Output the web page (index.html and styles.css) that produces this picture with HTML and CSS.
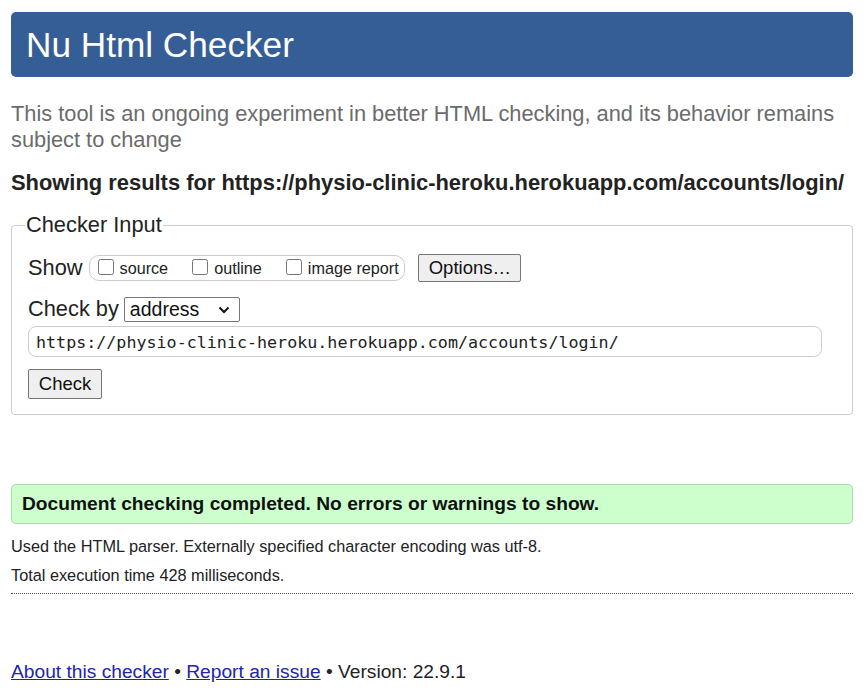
FILE: index.html
```html
<!DOCTYPE html>
<html lang="en">
<head>
<meta charset="utf-8">
<title>Nu Html Checker</title>
<link rel="stylesheet" href="styles.css">
</head>
<body>
<h1 class="title">Nu Html Checker</h1>
<p class="intro">This tool is an ongoing experiment in better HTML checking, and its behavior remains subject to change</p>
<p class="showing">Showing results for https://physio-clinic-heroku.herokuapp.com/accounts/login/</p>
<form class="form">
  <fieldset class="checker">
    <legend class="legend">Checker Input</legend>
    <div class="row">
      <span class="label">Show</span>
      <fieldset class="group">
        <label class="opt"><input type="checkbox" class="cb">source</label>
        <label class="opt"><input type="checkbox" class="cb">outline</label>
        <label class="opt"><input type="checkbox" class="cb">image report</label>
      </fieldset>
      <button type="button" class="btn options">Options…</button>
    </div>
    <div class="row row2">
      <span class="label">Check by</span>
      <span class="selwrap">
        <select class="select"><option>address</option></select>
        <svg class="chev" width="12" height="8" viewBox="0 0 12 8"><path d="M1.5 1.5 L6 6 L10.5 1.5" fill="none" stroke="#111" stroke-width="2"/></svg>
      </span>
    </div>
    <div class="urlrow">
      <input class="url" type="text" value="https://physio-clinic-heroku.herokuapp.com/accounts/login/">
    </div>
    <div class="btnrow">
      <button type="button" class="btn check">Check</button>
    </div>
  </fieldset>
</form>
<p class="success">Document checking completed. No errors or warnings to show.</p>
<p class="details">Used the HTML parser. Externally specified character encoding was utf-8.</p>
<p class="details">Total execution time 428 milliseconds.</p>
<hr class="rule">
<p class="footer"><a href="#" class="link">About this checker</a> • <a href="#" class="link">Report an issue</a> • Version: 22.9.1</p>
</body>
</html>
```
FILE: styles.css
```css
html { background: #fff; }
body {
  margin: 0;
  padding: 12px 15px 0 11px;
  font-family: "Liberation Sans", Arial, sans-serif;
  color: #222;
}
.title {
  margin: 0;
  height: 65px;
  line-height: 65px;
  padding-left: 15px;
  background: #365e96;
  color: #fff;
  font-weight: normal;
  font-size: 35.2px;
  border-radius: 5px;
}
.intro {
  margin: 24px 0 0;
  font-size: 21.8px;
  line-height: 26px;
  color: #6b6b6b;
}
.showing {
  margin: 17px 0 0;
  font-size: 21.9px;
  line-height: 26px;
  font-weight: bold;
  color: #222;
}
.form { margin: 17px 0 0; }
.checker {
  margin: 0;
  padding: 0 16px 15px 16px;
  border: 1px solid #ccc;
  border-radius: 4px;
}
.legend {
  padding: 0 1px;
  margin-left: -3px;
  font-size: 21.8px;
  line-height: 24px;
  color: #222;
}
.row {
  display: flex;
  align-items: center;
  margin-top: 17px;
}
.row2 { margin-top: 14px; }
.label {
  font-size: 21.8px;
  line-height: 26px;
  margin-right: 5px;
}
.group {
  display: flex;
  align-items: center;
  margin: 0 0 0 1px;
  padding: 0 5px 0 8px;
  height: 24px;
  border: 1px solid #ccc;
  border-radius: 10px;
}
.opt {
  display: flex;
  align-items: center;
  font-size: 16.2px;
  margin-right: 24px;
  color: #222;
}
.opt:last-child { margin-right: 0; }
.cb {
  width: 16px;
  height: 16px;
  margin: 0 6px 3px 0;
}
.btn {
  font-family: "Liberation Sans", Arial, sans-serif;
  font-size: 18.5px;
  color: #111;
  background: #efefef;
  border: 1px solid #767676;
  border-radius: 2px;
  padding: 0 10px;
  height: 28px;
}
.options { margin-left: 13px; width: 103px; }
.selwrap {
  position: relative;
  display: block;
  height: 25px;
}
.select {
  appearance: none;
  -webkit-appearance: none;
  display: block;
  font-family: "Liberation Sans", Arial, sans-serif;
  font-size: 19.5px;
  width: 116px;
  height: 25px;
  border: 1px solid #767676;
  border-radius: 2px;
  background: #fff;
  color: #111;
  padding: 0 0 0 5px;
}
.chev {
  position: absolute;
  right: 10px;
  top: 9px;
  pointer-events: none;
}
.urlrow { margin-top: 4px; }
.url {
  display: block;
  box-sizing: border-box;
  width: 794px;
  height: 31px;
  border: 1px solid #ccc;
  border-radius: 8px;
  padding: 0 7px;
  font-family: "DejaVu Sans Mono", "Liberation Mono", monospace;
  font-size: 16.7px;
  color: #222;
}
.btnrow { margin-top: 12px; }
.check { display: block; width: 74px; height: 30px; padding: 0; }
.success {
  margin: 69px 0 0;
  height: 38px;
  line-height: 38px;
  padding-left: 10px;
  background: #ccffcc;
  border: 1px solid #aad7aa;
  border-radius: 5px;
  font-weight: bold;
  font-size: 19.2px;
  color: #111;
}
.details {
  margin: 13px 0 0;
  font-size: 16.3px;
  line-height: 18px;
  color: #222;
}
.details + .details { margin-top: 11px; }
.rule {
  margin: 9px 0 0;
  border: 0;
  border-top: 1px dotted #555;
  height: 0;
}
.footer {
  margin: 66px 0 0;
  font-size: 19.2px;
  line-height: 24px;
  color: #222;
}
.link { color: #2323b0; }
```
